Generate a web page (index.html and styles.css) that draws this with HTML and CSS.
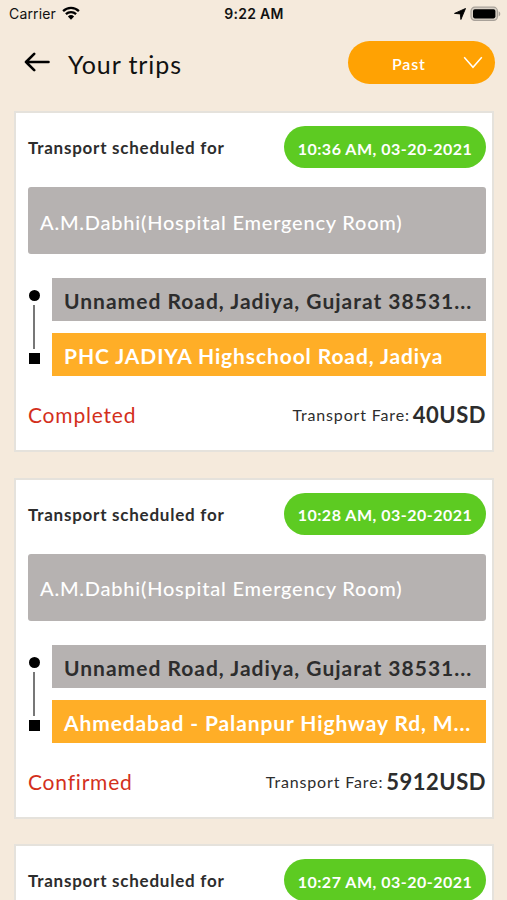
FILE: index.html
```html
<!DOCTYPE html>
<html lang="en">
<head>
  <meta charset="UTF-8">
  <meta name="viewport" content="width=device-width, initial-scale=1.0">
  <title>Your trips</title>
  <link rel="stylesheet" href="styles.css">
</head>
<body>
  <div class="status-bar">
    <div class="carrier">
      <span>Carrier</span>
      <svg width="18" height="14" viewBox="0 0 18 14">
        <path d="M1.1 5.1a11.4 11.4 0 0 1 15.8 0M3.9 8.1a7.4 7.4 0 0 1 10.2 0" fill="none" stroke="#000" stroke-width="2.3"/>
        <path d="M9 13.8L5.9 10.4a4.6 4.6 0 0 1 6.2 0z"/>
      </svg>
    </div>
    <div class="clock">9:22 AM</div>
    <div class="indicators">
      <svg width="12" height="12" viewBox="0 0 12 12">
        <path d="M11.5.5L6.9 11.5 6.3 5.9.5 5.4z" stroke="#000" stroke-width=".9" stroke-linejoin="round"/>
      </svg>
      <svg width="31" height="16" viewBox="0 0 31 16">
        <rect x="1" y="1.2" width="26.4" height="13.2" rx="3.8" fill="#d9d1c6" stroke="#a8a199" stroke-width="1.2"/>
        <rect x="3" y="3.2" width="22.4" height="9.2" rx="1.8"/>
        <path d="M28.6 5.2c2.2.8 2.2 4.4 0 5.2z" fill="#a8a199"/>
      </svg>
    </div>
  </div>

  <header>
    <svg class="back" width="26" height="20" viewBox="0 0 26 20">
      <path d="M24.5 10H2M10.2 1.8L2 10l8.2 8.2" fill="none" stroke="#000" stroke-width="2.6" stroke-linecap="round" stroke-linejoin="round"/>
    </svg>
    <h1>Your trips</h1>
    <div class="filter">
      <span>Past</span>
      <svg width="20" height="13" viewBox="0 0 20 13">
        <path d="M1.2 1.2L10 11.3l8.8-10.1" fill="none" stroke="#fff" stroke-width="1.5"/>
      </svg>
    </div>
  </header>

  <main>
    <div class="trip-card">
      <div class="trip-top">
        <span class="label">Transport scheduled for</span>
        <span class="time">10:36 AM, 03-20-2021</span>
      </div>
      <div class="patient"><span>A.M.Dabhi(Hospital Emergency Room)</span></div>
      <div class="route">
        <div class="track">
          <i class="dot"></i>
          <i class="line"></i>
          <i class="square"></i>
        </div>
        <div class="stops">
          <div class="stop from"><span>Unnamed Road, Jadiya, Gujarat 38531...</span></div>
          <div class="stop to"><span>PHC JADIYA Highschool Road, Jadiya</span></div>
        </div>
      </div>
      <div class="trip-bottom">
        <span class="state">Completed</span>
        <span class="fare">Transport Fare:</span>
        <span class="amount">40USD</span>
      </div>
    </div>

    <div class="trip-card">
      <div class="trip-top">
        <span class="label">Transport scheduled for</span>
        <span class="time">10:28 AM, 03-20-2021</span>
      </div>
      <div class="patient"><span>A.M.Dabhi(Hospital Emergency Room)</span></div>
      <div class="route">
        <div class="track">
          <i class="dot"></i>
          <i class="line"></i>
          <i class="square"></i>
        </div>
        <div class="stops">
          <div class="stop from"><span>Unnamed Road, Jadiya, Gujarat 38531...</span></div>
          <div class="stop to"><span>Ahmedabad - Palanpur Highway Rd, M...</span></div>
        </div>
      </div>
      <div class="trip-bottom">
        <span class="state">Confirmed</span>
        <span class="fare">Transport Fare:</span>
        <span class="amount">5912USD</span>
      </div>
    </div>

    <div class="trip-card">
      <div class="trip-top">
        <span class="label">Transport scheduled for</span>
        <span class="time">10:27 AM, 03-20-2021</span>
      </div>
    </div>
  </main>
</body>
</html>
```
FILE: styles.css
```css
* {
  box-sizing: border-box;
}

body {
  margin: 0;
  height: 900px;
  overflow: hidden;
  background: #f5eadc;
  color: #2d2d2d;
  font-family: Lato, "Open Sans", sans-serif;
  white-space: nowrap;
}

svg {
  display: block;
  flex: none;
}

.status-bar {
  display: grid;
  grid-template-columns: 1fr auto 1fr;
  align-items: center;
  height: 27px;
  padding: 0 6px 0 9px;
  color: #111;
  font-family: Inter, sans-serif;
  font-size: 14px;
}

.carrier {
  display: flex;
  align-items: center;
  gap: 6px;
}

.carrier span {
  letter-spacing: 0.15px;
}

.carrier svg {
  margin-top: -2px;
}

.clock {
  margin-right: 2px;
  font-weight: 600;
  letter-spacing: 0.3px;
}

.indicators {
  display: flex;
  align-items: center;
  justify-content: flex-end;
  gap: 4px;
}

header {
  display: flex;
  align-items: center;
  height: 70px;
  padding: 0 12px 0 24px;
}

.back {
  margin-right: 18px;
}

h1 {
  margin: 3px 0 0;
  color: #111;
  font-size: 25px;
  font-weight: 400;
  letter-spacing: 0.9px;
}

.filter {
  display: flex;
  align-items: center;
  justify-content: space-between;
  width: 147px;
  height: 43px;
  margin-left: auto;
  padding: 0 12px 0 44px;
  border-radius: 22px;
  background: #ffa203;
  color: #fff;
  font-size: 16px;
  font-weight: 600;
  letter-spacing: 0.8px;
}

.filter span {
  padding-top: 2px;
}

main {
  height: 803px;
  padding: 14px 13px 0 14px;
  overflow: hidden;
}

.trip-card {
  height: 341px;
  margin-bottom: 25.5px;
  padding: 13px 6px 0 12px;
  border: 2px solid #e5e2dc;
  background: #fff;
}

.trip-top {
  display: flex;
  align-items: center;
  justify-content: space-between;
  height: 42px;
}

.label {
  padding-top: 1px;
  font-size: 17px;
  font-weight: 700;
  letter-spacing: 0.75px;
}

.time {
  display: flex;
  align-items: center;
  justify-content: center;
  width: 202px;
  height: 42px;
  padding-top: 2px;
  border-radius: 21px;
  background: #5dcb22;
  color: #fff;
  font-size: 16px;
  font-weight: 700;
  letter-spacing: 0.5px;
}

.patient {
  display: flex;
  align-items: center;
  height: 67px;
  margin-top: 19px;
  padding: 2px 12px 0;
  border-radius: 3px;
  background: #b6b2b1;
  color: #fff;
  font-size: 20px;
  font-weight: 500;
  letter-spacing: 0.78px;
}

.route {
  display: flex;
  margin-top: 24px;
}

.track {
  display: flex;
  flex-direction: column;
  align-items: center;
  width: 12px;
  margin-right: 12px;
  padding-top: 12px;
}

.dot {
  width: 11px;
  height: 11px;
  border-radius: 50%;
  background: #000;
}

.line {
  width: 2px;
  height: 44px;
  margin: 4px 0;
  background: #777;
}

.square {
  width: 11px;
  height: 11px;
  background: #000;
}

.stops {
  flex: 1;
  display: grid;
  gap: 12px;
}

.stop {
  display: flex;
  align-items: center;
  height: 43px;
  padding: 2px 12px 0;
  font-size: 21px;
  font-weight: 700;
  letter-spacing: 0.89px;
}

.from {
  background: #b6b2b1;
  color: #2d2d2d;
  letter-spacing: 1px;
}

.to {
  background: #ffae27;
  color: #fff;
}

.trip-bottom {
  display: flex;
  align-items: baseline;
  margin-top: 25px;
}

.state {
  margin-right: auto;
  color: #d3301c;
  font-size: 21px;
  letter-spacing: 0.8px;
}

.fare {
  margin-right: 3px;
  font-size: 16px;
  letter-spacing: 0.85px;
  /* sits a little above the amount's baseline */
  margin-bottom: 2px;
  transform: translateY(-2px);
}

.amount {
  font-size: 22px;
  font-weight: 700;
  letter-spacing: 0.5px;
}
```
